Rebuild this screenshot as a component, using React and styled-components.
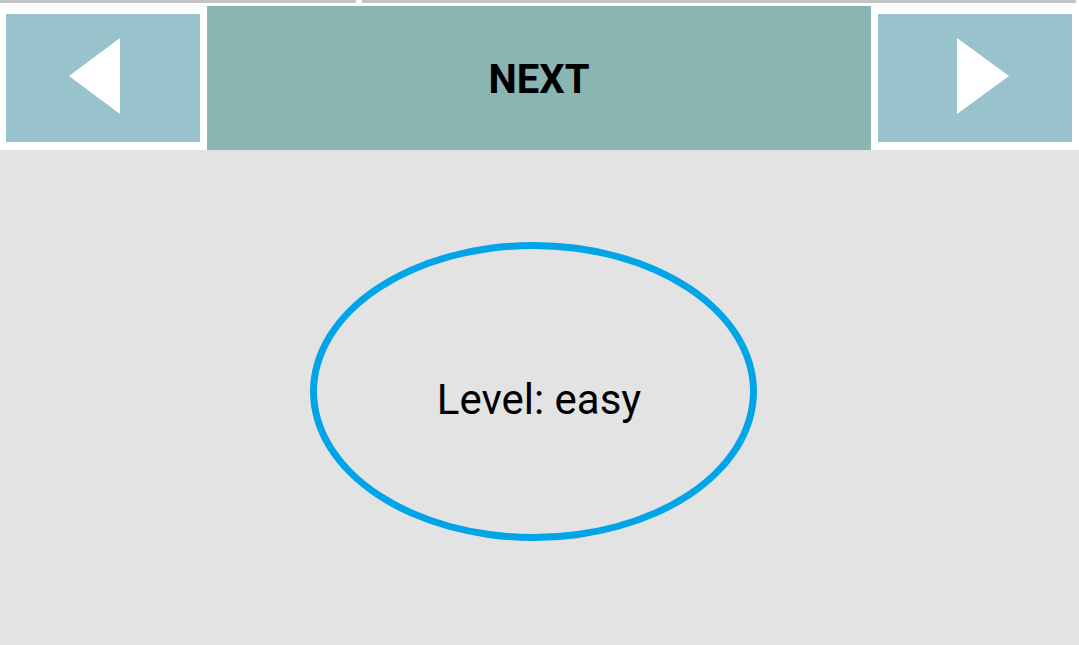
import styled, { createGlobalStyle } from 'styled-components';

const GlobalStyle = createGlobalStyle`
	html, body {
		margin: 0;
		padding: 0;
		background: #ffffff;
		font-family: Roboto, 'Liberation Sans', sans-serif;
	}
`;

const Screen = styled.div`
	width: 1079px;
	height: 645px;
	display: flex;
	flex-direction: column;
	overflow: hidden;
`;

const Progress = styled.div`
	display: flex;
	gap: 6px;
	height: 3px;
	padding-right: 3px;
`;

const Segment = styled.div`
	width: ${(p) => p.$width}px;
	background: #c4c4c4;
`;

const Header = styled.div`
	display: flex;
	height: 147px;
	padding: 0 7px 0 6px;
	gap: 7px;
	background: #ffffff;
`;

const ArrowButton = styled.button`
	width: 194px;
	height: 128px;
	margin-top: 11px;
	border: none;
	padding: 0 ${(p) => (p.$side === 'left' ? '17px' : '0')} 5px ${(p) => (p.$side === 'right' ? '16px' : '0')};
	background: #99c3cc;
	display: flex;
	align-items: center;
	justify-content: center;
	cursor: pointer;
`;

const NextButton = styled.button`
	flex: 1;
	margin-top: 3px;
	border: none;
	background: #8bb5b3;
	color: #000000;
	font-family: Roboto, 'Liberation Sans', sans-serif;
	font-weight: 700;
	font-size: 40px;
	display: flex;
	align-items: center;
	justify-content: center;
	padding: 3px 0 0 0;
	cursor: pointer;
`;

const Body = styled.div`
	flex: 1;
	background: #e3e3e3;
	padding: 92px 0 0 310px;
`;

const Ellipse = styled.div`
	box-sizing: border-box;
	width: 447px;
	height: 299px;
	border: 7px solid #00a5e8;
	border-radius: 50%;
	display: flex;
	align-items: center;
	justify-content: center;
	padding: 16px 0 0 11px;
`;

const LevelText = styled.span`
	font-size: 42px;
	color: #000000;
	line-height: 1;
`;

const Triangle = ({ dir }) => (
	<svg width="52" height="76" viewBox="0 0 52 76">
		{dir === 'left' ? (
			<polygon points="0,38 51,0 51,76" fill="#ffffff" />
		) : (
			<polygon points="0,0 0,76 52,38" fill="#ffffff" />
		)}
	</svg>
);

export default function App() {
	return (
		<Screen>
			<GlobalStyle />
			<Progress>
				<Segment $width={356} />
				<Segment $width={714} />
			</Progress>
			<Header>
				<ArrowButton $side="left" aria-label="previous">
					<Triangle dir="left" />
				</ArrowButton>
				<NextButton>NEXT</NextButton>
				<ArrowButton $side="right" aria-label="next">
					<Triangle dir="right" />
				</ArrowButton>
			</Header>
			<Body>
				<Ellipse>
					<LevelText>Level: easy</LevelText>
				</Ellipse>
			</Body>
		</Screen>
	);
}
